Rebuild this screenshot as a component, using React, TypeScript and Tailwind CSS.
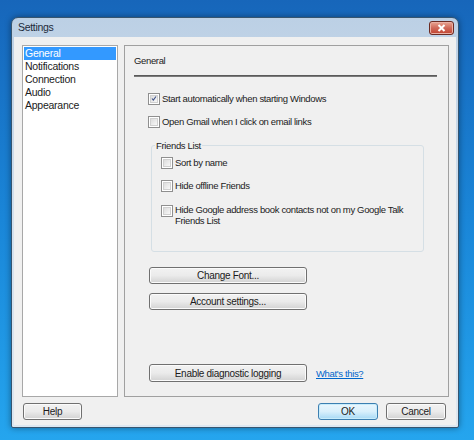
import React from "react";

const sections = ["General", "Notifications", "Connection", "Audio", "Appearance"];

function Check({ checked = false }: { checked?: boolean }) {
  return (
    <span className="flex h-[12px] w-[12px] shrink-0 items-center justify-center border border-[#8f8f8f] bg-white">
      <span className="flex h-[8px] w-[8px] items-center justify-center border border-[#d0d0d0] bg-gradient-to-br from-[#dcdcdc] to-[#f8f8f8]">
        {checked && (
          <svg width="9" height="9" viewBox="0 0 9 9" className="-mt-[1px]">
            <path d="M1.5 4.5 L3.5 7 L7.5 1.5" fill="none" stroke="#3c4f86" strokeWidth="1.6" />
          </svg>
        )}
      </span>
    </span>
  );
}

function Button({ label, className = "", primary = false }: { label: string; className?: string; primary?: boolean }) {
  return (
    <div
      className={
        "flex h-[17px] items-center justify-center rounded-[3px] border text-[10px] tracking-[-0.3px] " +
        (primary
          ? "border-[#3c7fb1] bg-gradient-to-b from-[#eaf6fd] via-[#d9f0fc] to-[#a7d9f5] shadow-[inset_0_0_0_1px_#c8ecfb] "
          : "border-[#707070] bg-gradient-to-b from-[#f2f2f2] via-[#ebebeb] to-[#d2d2d2] shadow-[inset_0_0_0_1px_#fbfbfb] ") +
        className
      }
    >
      {label}
    </div>
  );
}

export default function App() {
  return (
    <div className="h-[440px] w-[474px] overflow-hidden bg-gradient-to-b from-[#1766ba] via-[#1a86d8] to-[#25a5ee] pt-[17px] pl-[11px] font-['Liberation_Sans',Arial,sans-serif] tracking-[-0.25px] text-[#1b1b1b]">
      <div className="flex h-[411px] w-[448px] flex-col rounded-t-[7px] rounded-b-[2px] border border-[#37556f] bg-gradient-to-b from-[#bcd0e5] via-[#d4e1ee] to-[#dde7f1] px-[2px] pb-[2px] shadow-[0_0_6px_rgba(0,0,0,0.4)]">
        {/* title bar */}
        <div className="flex h-[19px] items-center justify-between pl-[4px] pr-[2px]">
          <span className="text-[10.5px] tracking-[-0.3px] text-[#1c2a3a]">Settings</span>
          <div className="flex h-[14px] w-[25px] items-center justify-center rounded-[3px] border border-[#6b2a22] bg-gradient-to-b from-[#e8a593] via-[#d0695a] to-[#c0412e] shadow-[inset_0_0_0_1px_#eab0a4]">
            <svg width="9" height="8" viewBox="0 0 9 8">
              <path d="M1.5 1 L7.5 7 M7.5 1 L1.5 7" stroke="#ffffff" strokeWidth="2" />
            </svg>
          </div>
        </div>

        {/* client area */}
        <div className="flex flex-1 flex-col bg-[#f0f0f0] pt-[8px] pl-[8px] pr-[7px] pb-[4px]">
          <div className="flex h-[352px] gap-[6px]">
            {/* section list */}
            <div className="w-[96px] border border-[#a8a8a8] bg-white p-[1px] text-[10.5px] leading-[13px]">
              {sections.map((s, i) => (
                <div key={s} className={"pl-[1px] " + (i === 0 ? "bg-[#3399ff] text-white" : "")}>
                  {s}
                </div>
              ))}
            </div>

            {/* panel */}
            <div className="flex w-[325px] flex-col border border-[#a0a0a0] bg-[#f0f0f0] pl-[9px] pr-[11px] text-[9.5px] leading-[13px] tracking-[-0.35px]">
              <div className="mt-[8px]">General</div>
              <div className="mt-[8px] h-[2px] border-t border-[#5a5a5a] border-b-white bg-[#7a7a7a]" />

              <div className="ml-[14px] mt-[15px] flex items-center gap-[2px]">
                <Check checked />
                <span>Start automatically when starting Windows</span>
              </div>
              <div className="ml-[14px] mt-[10px] flex items-center gap-[2px]">
                <Check />
                <span>Open Gmail when I click on email links</span>
              </div>

              {/* friends list group */}
              <div className="relative ml-[17px] mt-[17px] h-[107px] w-[273px] rounded-[3px] border border-[#d5dfe5]">
                <span className="absolute -top-[7px] left-[3px] bg-[#f0f0f0] px-[1px]">Friends List</span>
                <div className="flex flex-col pl-[9px] pt-[10px]">
                  <div className="flex items-center gap-[2px]">
                    <Check />
                    <span>Sort by name</span>
                  </div>
                  <div className="mt-[10px] flex items-center gap-[2px]">
                    <Check />
                    <span>Hide offline Friends</span>
                  </div>
                  <div className="mt-[12px] flex items-start gap-[2px]">
                    <span className="mt-[1px]">
                      <Check />
                    </span>
                    <span className="leading-[11px]">
                      Hide Google address book contacts not on my Google Talk
                      <br />
                      Friends List
                    </span>
                  </div>
                </div>
              </div>

              <Button label="Change Font..." className="ml-[15px] mt-[15px] w-[158px]" />
              <Button label="Account settings..." className="ml-[15px] mt-[9px] w-[158px]" />

              <div className="ml-[15px] mt-[54px] flex items-center gap-[9px]">
                <Button label="Enable diagnostic logging" className="h-[18px] w-[158px]" />
                <span className="text-[#0066cc] underline">What's this?</span>
              </div>
            </div>
          </div>

          {/* bottom buttons */}
          <div className="mt-[6px] flex pl-[1px] pr-[3px]">
            <Button label="Help" className="w-[59px]" />
            <div className="flex-1" />
            <Button label="OK" primary className="w-[60px]" />
            <Button label="Cancel" className="ml-[8px] w-[60px]" />
          </div>
        </div>
      </div>
    </div>
  );
}
